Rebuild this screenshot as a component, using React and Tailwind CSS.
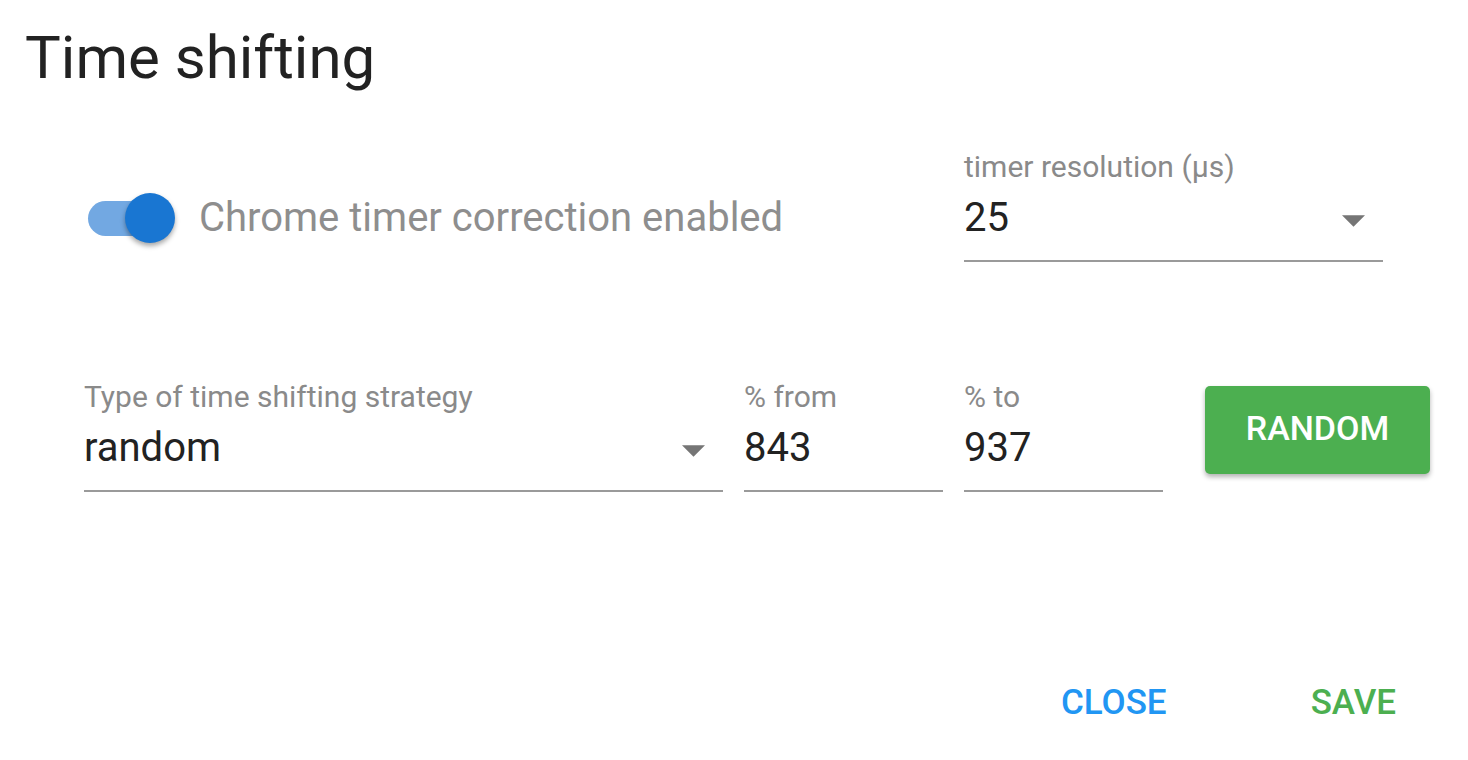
import React, { useState } from 'react';

function Arrow() {
  return (
    <svg width="23" height="12" viewBox="0 0 10 5" className="shrink-0">
      <path d="M0 0l5 5 5-5z" fill="#757575" />
    </svg>
  );
}

function Field({ label, value, width, select }) {
  return (
    <div className={`flex flex-col ${width}`}>
      <div className="text-[30px] leading-[34px] text-[#8a8a8a] whitespace-nowrap">{label}</div>
      <div className="mt-[9px] pb-[17px] border-b-2 border-[#9a9a9a] flex items-center justify-between">
        <span className="text-[40px] leading-[50px] text-[#222]">{value}</span>
        {select && <span className="mr-[18px] mt-[6px]"><Arrow /></span>}
      </div>
    </div>
  );
}

export default function App() {
  const [enabled, setEnabled] = useState(true);

  return (
    <div className="min-h-screen bg-white font-['Roboto',sans-serif] overflow-hidden">
      <div className="pl-[25px] pt-[23px]">
        <h1 className="text-[60px] leading-[70px] text-[#222] font-normal">Time shifting</h1>
      </div>

      {/* row 1 */}
      <div className="mt-[57px] flex">
        <div className="w-[964px] pl-[88px] pt-[43px]">
          <div className="h-[50px] flex items-center">
            <button
              onClick={() => setEnabled(!enabled)}
              className="relative w-[87px] h-[50px] flex items-center"
            >
              <span className="block w-[72px] h-[35px] rounded-full bg-[#72a8e2]" />
              <span className="absolute left-[37px] top-0 w-[50px] h-[50px] rounded-full bg-[#1976d2] shadow-[0_3px_5px_rgba(0,0,0,0.35)]" />
            </button>
            <span className="ml-[24px] text-[40px] leading-[50px] text-[#8e8e8e]">Chrome timer correction enabled</span>
          </div>
        </div>
        <Field label="timer resolution (μs)" value="25" width="w-[419px]" select />
      </div>

      {/* row 2 */}
      <div className="mt-[118px] flex pl-[84px]">
        <Field label="Type of time shifting strategy" value="random" width="w-[639px]" select />
        <div className="ml-[21px]">
          <Field label="% from" value="843" width="w-[199px]" />
        </div>
        <div className="ml-[21px]">
          <Field label="% to" value="937" width="w-[199px]" />
        </div>
        <div className="ml-[42px] pt-[6px]">
          <button className="w-[225px] h-[88px] pb-[4px] rounded-[5px] bg-[#4caf50] text-white text-[34px] font-medium uppercase shadow-[0_3px_5px_rgba(0,0,0,0.3)]">
            Random
          </button>
        </div>
      </div>

      {/* footer */}
      <div className="mt-[186px] flex justify-end pr-[72px]">
        <button className="text-[35px] font-medium uppercase text-[#2196f3] leading-[50px]">Close</button>
        <button className="ml-[144px] text-[35px] font-medium uppercase text-[#4caf50] leading-[50px]">Save</button>
      </div>
    </div>
  );
}
